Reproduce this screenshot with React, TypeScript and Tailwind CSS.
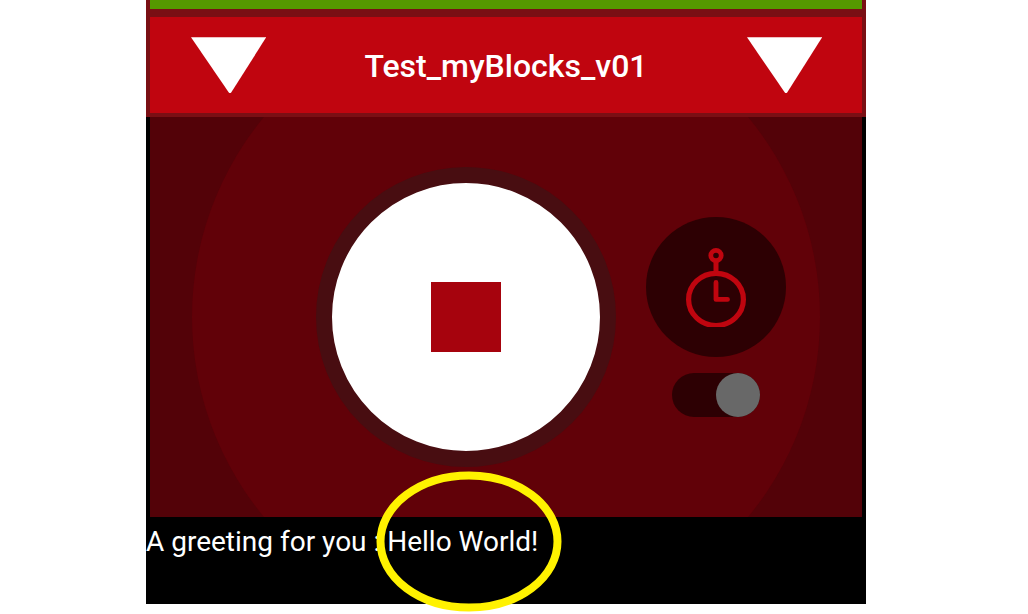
import { useState } from "react";

function TriangleIcon() {
  return (
    <svg viewBox="0 0 76 56" className="block h-14 w-[76px]" aria-hidden="true">
      <path d="M1 0.3H76.2L41.2 55.5Q40 56.5 38.8 55.5Z" fill="#fff" />
    </svg>
  );
}

function StopwatchIcon() {
  return (
    <svg viewBox="0 0 60 80" className="h-20 w-[60px]" fill="none" stroke="#c0050f" aria-hidden="true">
      <circle cx="30" cy="8.5" r="5.2" strokeWidth="4.8" />
      <path d="M30 14V24" strokeWidth="5" />
      <ellipse cx="30" cy="52.4" rx="27.4" ry="26.1" strokeWidth="5.2" />
      <path d="M30 35.5V52.4H41.5" strokeWidth="4.8" strokeLinecap="round" strokeLinejoin="round" />
    </svg>
  );
}

function Header({ title }: { title: string }) {
  return (
    <header className="border-x-4 border-b-4 border-[#7a0f14] bg-[#c0050f]">
      <div className="h-[9px] bg-[#559900]" />
      <div className="h-2 bg-[#7a0f14]" />
      <div className="flex items-center justify-between px-10 py-5">
        <button type="button" aria-label="Previous options">
          <TriangleIcon />
        </button>
        <h1 className="pt-0.5 text-[32px] leading-10 font-medium text-white">{title}</h1>
        <button type="button" aria-label="More options">
          <TriangleIcon />
        </button>
      </div>
    </header>
  );
}

function ControlPanel() {
  const [timed, setTimed] = useState(true);
  return (
    <section className="relative isolate mx-1 flex items-center justify-center gap-[30px] overflow-hidden bg-[#530208] py-[50px] pl-[90px]">
      <div className="absolute top-1/2 left-1/2 -z-10 size-[628px] -translate-x-1/2 -translate-y-1/2 rounded-full bg-[#610108]" />
      <button
        type="button"
        aria-label="Stop"
        className="flex size-[300px] shrink-0 items-center justify-center rounded-full border-16 border-[#480d11] bg-white"
      >
        <span className="size-[70px] bg-[#a6030d]" />
      </button>
      <div className="flex flex-col items-center gap-4">
        <button
          type="button"
          aria-label="Timer"
          className="flex size-[140px] items-center justify-center rounded-full bg-[#2d0003]"
        >
          <StopwatchIcon />
        </button>
        <input
          type="checkbox"
          role="switch"
          aria-label="Use timer"
          checked={timed}
          onChange={(e) => setTimed(e.target.checked)}
          className="flex h-11 w-[88px] appearance-none rounded-full bg-[#2d0003] before:size-11 before:rounded-full before:bg-[#686868] before:content-[''] checked:justify-end"
        />
      </div>
    </section>
  );
}

function Output() {
  return (
    <section className="pt-[5px] pb-[42px] text-[28px] leading-10 text-white">
      <p className="whitespace-nowrap">
        A greeting for you :{" "}
        <span className="relative inline-block">
          Hello World!
          <svg
            viewBox="0 0 186 141"
            className="absolute top-1/2 left-1/2 h-[141px] w-[186px] max-w-none -translate-x-[87px] -translate-y-[71px]"
            fill="none"
            stroke="#fff200"
            strokeWidth="8"
            aria-hidden="true"
          >
            <ellipse cx="93" cy="70.5" rx="88.5" ry="66" />
          </svg>
        </span>
      </p>
    </section>
  );
}

export default function App() {
  return (
    <div className="flex min-h-screen items-start justify-center bg-white pr-4 pb-2.5 font-[Roboto,'Liberation_Sans',sans-serif]">
      <main className="w-full max-w-[720px] bg-black">
        <Header title="Test_myBlocks_v01" />
        <ControlPanel />
        <Output />
      </main>
    </div>
  );
}
